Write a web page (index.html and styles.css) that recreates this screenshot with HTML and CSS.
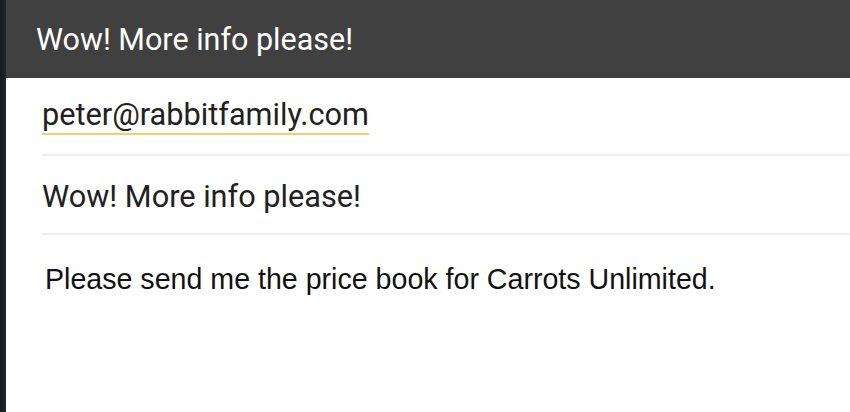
FILE: index.html
```html
<!DOCTYPE html>
<html>
<head>
<meta charset="utf-8">
<link rel="stylesheet" href="styles.css">
</head>
<body>
<div class="app">
  <div class="rail"></div>
  <div class="main">
    <header class="bar">Wow! More info please!</header>
    <div class="form">
      <div class="row row-email"><span class="email">peter@rabbitfamily.com</span></div>
      <div class="row row-subject">Wow! More info please!</div>
      <div class="message">Please send me the price book for Carrots Unlimited.</div>
    </div>
  </div>
</div>
</body>
</html>
```
FILE: styles.css
```css
html, body {
  margin: 0;
  padding: 0;
  height: 100%;
  background: #ffffff;
}
.app {
  display: flex;
  height: 412px;
  overflow: hidden;
}
.rail {
  width: 6px;
  flex: none;
  background: linear-gradient(to right, #17191b, #24272a);
}
.main {
  flex: 1;
  display: flex;
  flex-direction: column;
}
.bar {
  height: 78px;
  box-sizing: border-box;
  background: #404040;
  color: #ffffff;
  font-family: Roboto, sans-serif;
  font-size: 30.5px;
  padding-left: 30px;
  padding-top: 22px;
  line-height: 36px;
}
.form {
  padding-left: 36px;
}
.row {
  font-family: Roboto, sans-serif;
  font-size: 30.7px;
  color: #212121;
  border-bottom: 2px solid #eceef1;
  box-sizing: border-box;
}
.row-email {
  height: 78px;
  padding-top: 19px;
  line-height: 35px;
}
.email {
  display: inline-block;
  border-bottom: 2px solid #f6cd6c;
  padding-bottom: 1px;
}
.row-subject {
  height: 79px;
  padding-top: 23px;
  line-height: 36px;
}
.message {
  font-family: "Liberation Sans", Arial, sans-serif;
  font-size: 28.6px;
  color: #111111;
  padding-left: 3px;
  padding-top: 28px;
  line-height: 32px;
}
```
